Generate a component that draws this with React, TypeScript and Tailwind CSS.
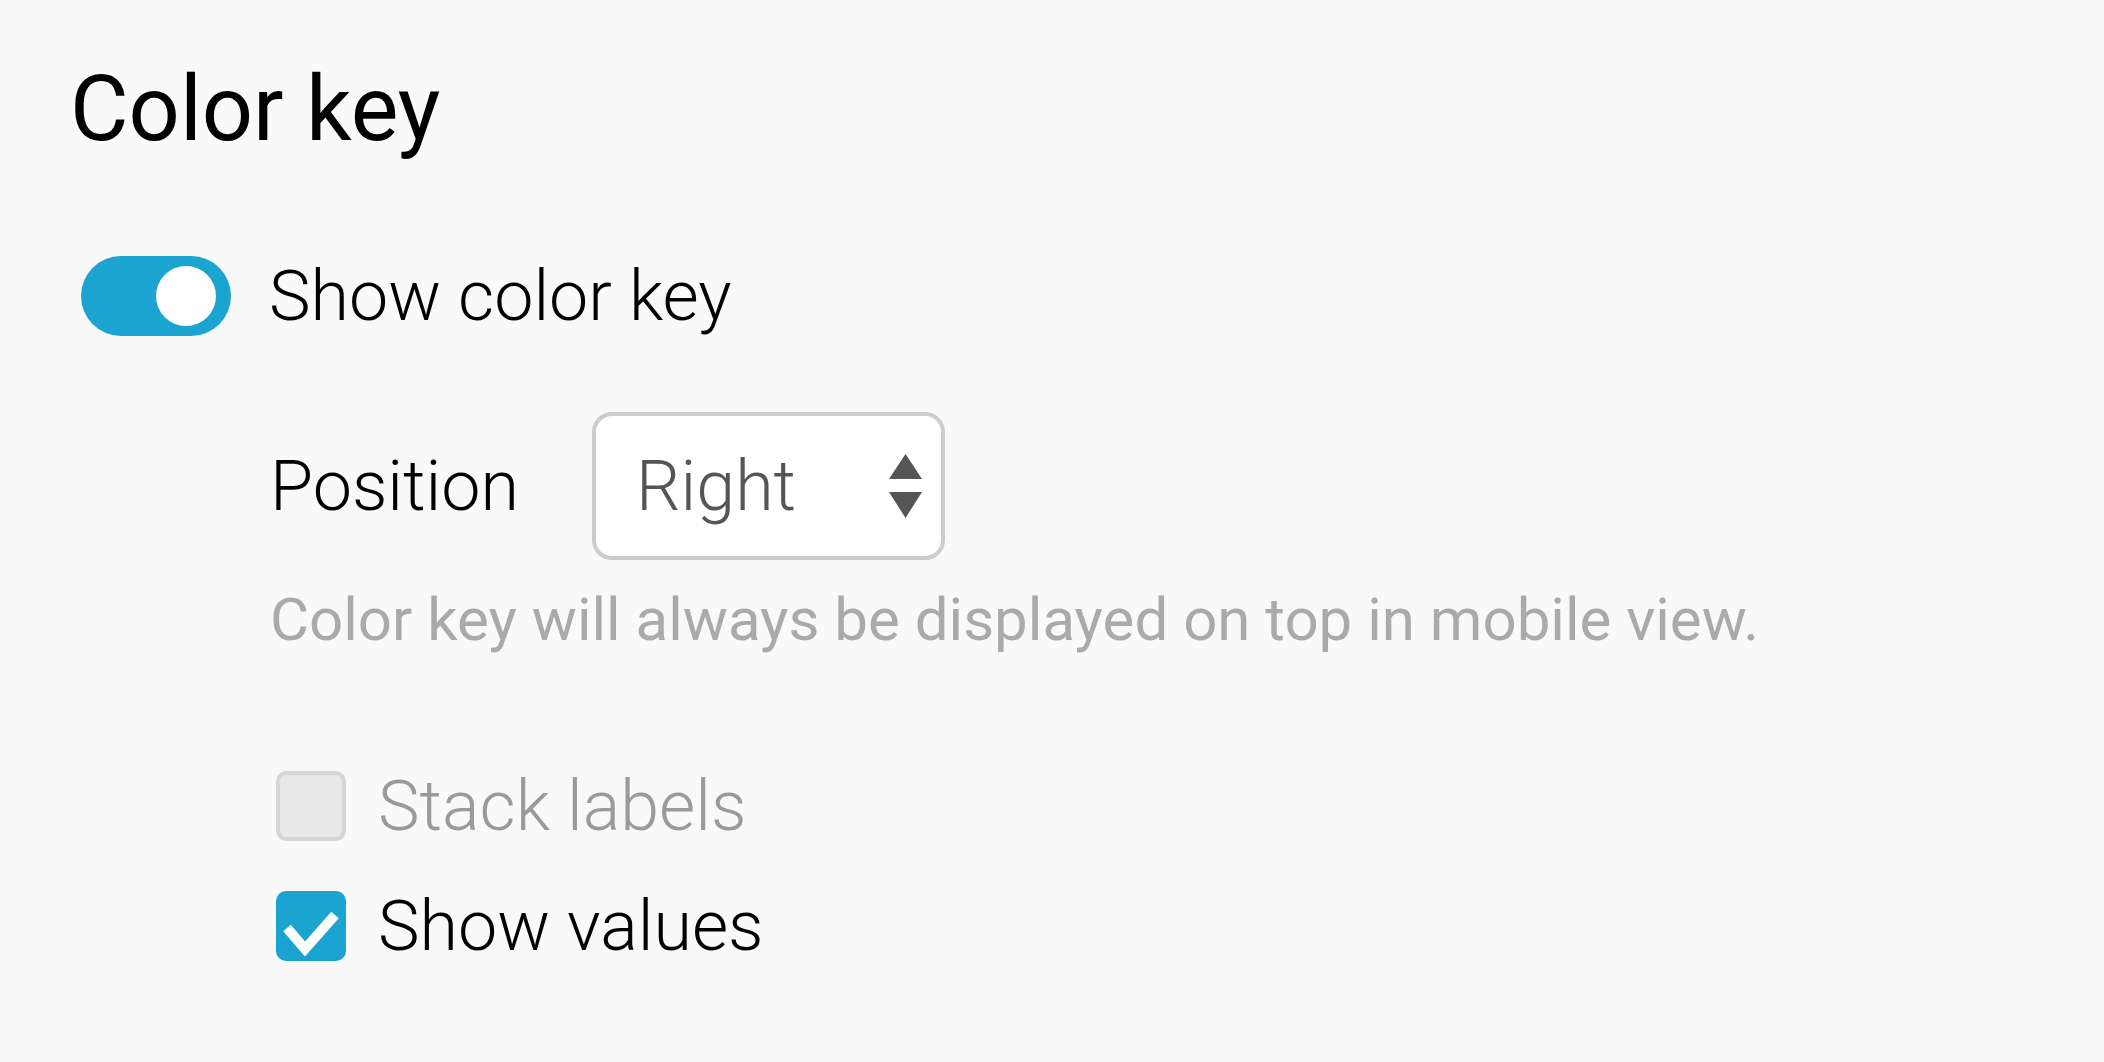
import { useState } from 'react'

function Toggle({ on, onChange }: { on: boolean; onChange: (value: boolean) => void }) {
  return (
    <button
      type="button"
      role="switch"
      aria-checked={on}
      onClick={() => onChange(!on)}
      className={`flex h-[80px] w-[150px] shrink-0 items-center rounded-full px-[15px] ${
        on ? 'justify-end bg-[#1aa4cf]' : 'justify-start bg-[#cfcfcf]'
      }`}
    >
      <span className="h-[60px] w-[60px] rounded-full bg-white" />
    </button>
  )
}

function Checkbox({
  checked,
  disabled,
  label,
  onChange,
}: {
  checked: boolean
  disabled?: boolean
  label: string
  onChange: (value: boolean) => void
}) {
  return (
    <label className="flex h-[70px] cursor-pointer items-center gap-[32px]">
      <span
        role="checkbox"
        aria-checked={checked}
        onClick={() => !disabled && onChange(!checked)}
        className={`flex h-[70px] w-[70px] shrink-0 items-center justify-center rounded-[10px] ${
          disabled
            ? 'border-[4px] border-[#d6d6d6] bg-[#e8e8e8]'
            : checked
              ? 'bg-[#1aa4cf]'
              : 'border-[4px] border-[#cfcfcf] bg-white'
        }`}
      >
        {checked && !disabled ? (
          <svg width="70" height="70" viewBox="0 0 70 70">
            <path d="M11 37 L29 58 L59 24" fill="none" stroke="white" strokeWidth="10" strokeLinecap="butt" />
          </svg>
        ) : null}
      </span>
      <span className={`text-[70px] font-light leading-[70px] ${disabled ? 'text-[#9a9a9a]' : 'text-black'}`}>
        {label}
      </span>
    </label>
  )
}

export default function App() {
  const [showKey, setShowKey] = useState(true)
  const [position, setPosition] = useState('right')
  const [stackLabels, setStackLabels] = useState(false)
  const [showValues, setShowValues] = useState(true)

  return (
    <div className="min-h-screen bg-[#f9f9f9] pl-[70px] pt-[65px] font-['Roboto',sans-serif] text-black">
      <h1 className="text-[90px] font-normal leading-[90px]">Color key</h1>

      <div className="mt-[101px] flex items-center gap-[38px] pl-[11px]">
        <Toggle on={showKey} onChange={setShowKey} />
        <span className="text-[70px] font-light leading-[80px]">Show color key</span>
      </div>

      <div className="ml-[200px]">
        <div className="mt-[76px] flex items-center gap-[73px]">
          <span className="text-[70px] font-light leading-[80px]">Position</span>
          <div className="relative">
            <select
              value={position}
              onChange={(event) => setPosition(event.target.value)}
              className="h-[148px] w-[353px] appearance-none rounded-[20px] border-[4px] border-[#cccccc] bg-white pl-[40px] text-[70px] font-light text-[#555] outline-none"
            >
              <option value="top">Top</option>
              <option value="right">Right</option>
              <option value="bottom">Bottom</option>
              <option value="left">Left</option>
            </select>
            <svg
              className="pointer-events-none absolute right-[23px] top-[42px]"
              width="33"
              height="64"
              viewBox="0 0 33 64"
            >
              <path d="M16.5 0 L33 25 L0 25 Z" fill="#555" />
              <path d="M0 38 L33 38 L16.5 64 Z" fill="#555" />
            </svg>
          </div>
        </div>

        <p className="mt-[30px] text-[60px] leading-[60px] text-[#aaaaaa]">
          Color key will always be displayed on top in mobile view.
        </p>

        <div className="mt-[121px] flex flex-col gap-[50px] pl-[6px]">
          <Checkbox checked={stackLabels} disabled label="Stack labels" onChange={setStackLabels} />
          <Checkbox checked={showValues} label="Show values" onChange={setShowValues} />
        </div>
      </div>
    </div>
  )
}
